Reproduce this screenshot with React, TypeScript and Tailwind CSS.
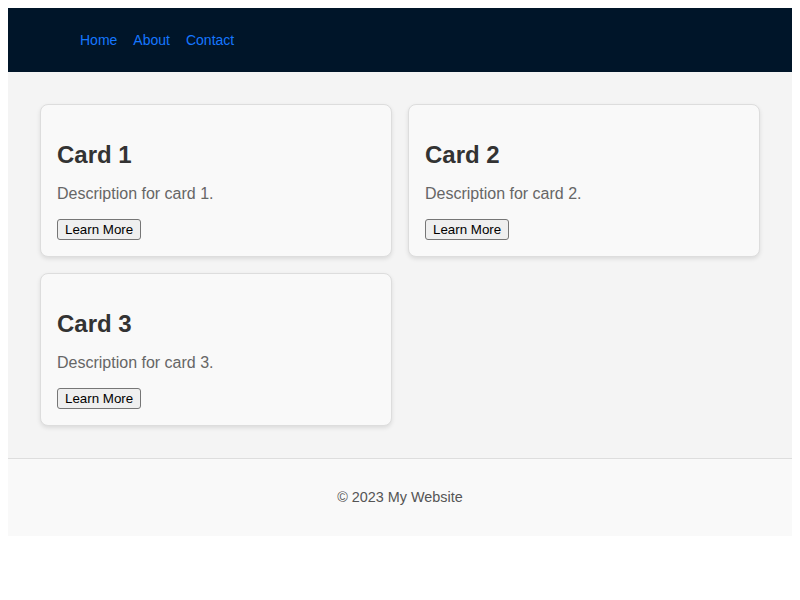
import React from "react";

const cards = [1, 2, 3];

export default function App() {
  return (
    <div className="p-2 bg-white min-h-[600px]" style={{ fontFamily: '"Liberation Sans", Arial, sans-serif' }}>
      <header className="h-16 bg-[#001529] flex items-center pl-[72px]">
        <nav className="flex gap-4 text-[14px] leading-4">
          <a href="#" className="text-[#1677ff]">Home</a>
          <a href="#" className="text-[#1677ff]">About</a>
          <a href="#" className="text-[#1677ff]">Contact</a>
        </nav>
      </header>
      <main className="bg-[#f4f4f4] p-8">
        <div className="grid grid-cols-2 gap-4">
          {cards.map((n) => (
            <div
              key={n}
              className="bg-[#f9f9f9] border border-[#dddddd] rounded-lg shadow-[0_2px_4px_rgba(0,0,0,0.1)] px-4 pb-4 pt-9"
            >
              <h2 className="text-[24px] leading-[28px] font-bold text-[#333333] mb-4">Card {n}</h2>
              <p className="text-[16px] leading-[18px] text-[#666666] mb-4">Description for card {n}.</p>
              <button className="block bg-[#efefef] border border-[#767676] rounded-[3px] px-[7px] py-[1px] text-[13.33px] leading-[17px] text-black">
                Learn More
              </button>
            </div>
          ))}
        </div>
      </main>
      <footer className="bg-[#f9f9f9] border-t border-[#dddddd] h-[78px] pb-[2px] flex items-center justify-center">
        <p className="text-[14.4px] leading-4 text-[#555555]">© 2023 My Website</p>
      </footer>
    </div>
  );
}
